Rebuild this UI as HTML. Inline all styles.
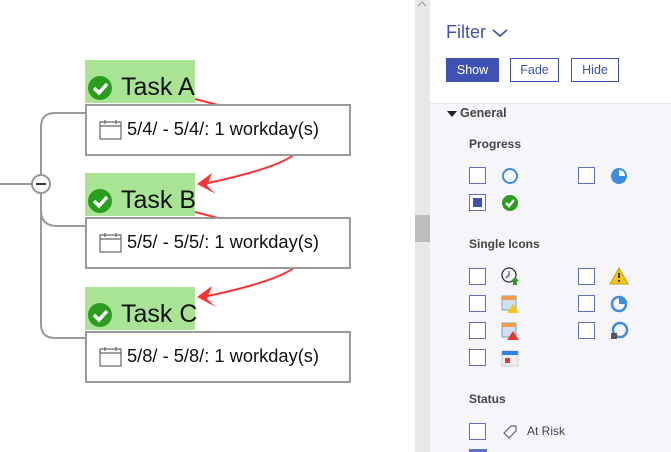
<!DOCTYPE html>
<html style="overflow:hidden"><head><style>
html,body{margin:0;width:671px;height:452px;overflow:hidden}
body{background:#fff;font-family:"Liberation Sans",sans-serif;position:relative}
.a{position:absolute}
.g{position:absolute;background:#a8e494;left:85px;width:110px;height:43px}
.tt{position:absolute;left:121px;font-size:25px;color:#111;line-height:30px}
.box{position:absolute;left:85px;width:262px;height:48px;border:2px solid #9a9a9a;background:#fff}
.dt{position:absolute;left:40px;top:12px;font-size:18.3px;color:#111}
.cb{position:absolute;width:15px;height:15px;border:1.5px solid #5f6fc4;background:#fff}
.lb{position:absolute;font-size:12px;font-weight:bold;color:#444}
.btn{position:absolute;top:58px;height:22px;border:1.5px solid #3f51b5;color:#3f51b5;font-size:12.5px;text-align:center;line-height:22px}
</style></head><body>
<svg class="a" style="left:0;top:0" width="415" height="452">
<g fill="none" stroke="#999" stroke-width="2">
<path d="M0 184H32"/>
<path d="M85 113H55Q41 113 41 127V324Q41 338 55 338H85"/>
<path d="M41 210Q41 226 57 226H85"/>
</g>
<circle cx="41" cy="184" r="9" fill="#fff" stroke="#999" stroke-width="2"/>
<path d="M36 184H46" stroke="#333" stroke-width="2"/>
<g fill="none" stroke="#f33" stroke-width="2">
<path d="M195 99Q260 115 300 135Q320 160 203 184"/>
<path d="M195 212Q260 228 300 248Q320 273 203 297"/>
</g>
<path d="M197 184L212 173L207 186L216 194Z" fill="#f33"/>
<path d="M197 297L212 286L207 299L216 307Z" fill="#f33"/>
</svg>
<div class="g" style="top:60px"></div>
<div class="g" style="top:173px"></div>
<div class="g" style="top:287px"></div>
<svg class="a" style="left:0;top:0" width="415" height="452">
<g><circle cx="100" cy="88" r="12" fill="#2a9d1e"/><path d="M94 88L99 93L107 84" stroke="#fff" stroke-width="3.5" fill="none"/></g>
<g><circle cx="100" cy="201" r="12" fill="#2a9d1e"/><path d="M94 201L99 206L107 197" stroke="#fff" stroke-width="3.5" fill="none"/></g>
<g><circle cx="100" cy="315" r="12" fill="#2a9d1e"/><path d="M94 315L99 320L107 311" stroke="#fff" stroke-width="3.5" fill="none"/></g>
</svg>
<div class="tt" style="top:72px">Task A</div>
<div class="tt" style="top:185px">Task B</div>
<div class="tt" style="top:299px">Task C</div>
<div class="box" style="top:104px"><svg class="a" style="left:12px;top:13px" width="24" height="22"><rect x="1" y="3" width="21" height="17" fill="none" stroke="#666" stroke-width="1.2"/><path d="M1 7H22M6 1V5M17 1V5" stroke="#666" stroke-width="1.2"/></svg><div class="dt">5/4/ - 5/4/: 1 workday(s)</div></div>
<div class="box" style="top:217px"><svg class="a" style="left:12px;top:13px" width="24" height="22"><rect x="1" y="3" width="21" height="17" fill="none" stroke="#666" stroke-width="1.2"/><path d="M1 7H22M6 1V5M17 1V5" stroke="#666" stroke-width="1.2"/></svg><div class="dt">5/5/ - 5/5/: 1 workday(s)</div></div>
<div class="box" style="top:331px"><svg class="a" style="left:12px;top:13px" width="24" height="22"><rect x="1" y="3" width="21" height="17" fill="none" stroke="#666" stroke-width="1.2"/><path d="M1 7H22M6 1V5M17 1V5" stroke="#666" stroke-width="1.2"/></svg><div class="dt">5/8/ - 5/8/: 1 workday(s)</div></div>

<div class="a" style="left:415px;top:0;width:15px;height:452px;background:#e8e8e8"></div>
<div class="a" style="left:415px;top:215px;width:15px;height:27px;background:#bdbdbd"></div>
<svg class="a" style="left:416px;top:0" width="12" height="8"><path d="M2 6L6 2L10 6" stroke="#999" fill="none"/></svg>
<div class="a" style="left:430px;top:103px;width:241px;height:349px;background:#f6f6fa;border-top:1px solid #e6e6ee"></div>
<div class="a" style="left:446px;top:22px;font-size:18px;color:#3f51b5">Filter</div>
<svg class="a" style="left:492px;top:28px" width="16" height="10"><path d="M1 2L8 8L15 2" stroke="#3f51b5" stroke-width="1.8" fill="none"/></svg>
<div class="btn" style="left:446px;width:51px;background:#3f51b5;color:#fff">Show</div>
<div class="btn" style="left:510px;width:47px">Fade</div>
<div class="btn" style="left:571px;width:46px">Hide</div>
<svg class="a" style="left:447px;top:110px" width="10" height="8"><path d="M0 1H10L5 7Z" fill="#222"/></svg>
<div class="lb" style="left:460px;top:106px;font-size:12.5px">General</div>
<div class="lb" style="left:469px;top:137px">Progress</div>
<div class="cb" style="left:469px;top:167px"></div>
<div class="cb" style="left:578px;top:167px"></div>
<div class="cb" style="left:469px;top:194px"><div class="a" style="left:3px;top:3px;width:9px;height:9px;background:#3f51b5"></div></div>
<svg class="a" style="left:500px;top:166px" width="20" height="20"><circle cx="10" cy="10" r="7" fill="none" stroke="#3b8de0" stroke-width="2"/></svg>
<svg class="a" style="left:609px;top:166px" width="20" height="20"><circle cx="10" cy="10" r="8" fill="#3b8de0"/><path d="M10 10V4A6 6 0 0 1 16 10Z" fill="#fff"/></svg>
<svg class="a" style="left:500px;top:193px" width="20" height="20"><circle cx="10" cy="10" r="8" fill="#2a9d1e"/><path d="M6 10L9 13L14 7" stroke="#fff" stroke-width="2.5" fill="none"/></svg>
<div class="lb" style="left:469px;top:237px">Single Icons</div>
<div class="cb" style="left:469px;top:268px"></div><div class="cb" style="left:578px;top:268px"></div>
<div class="cb" style="left:469px;top:295px"></div><div class="cb" style="left:578px;top:295px"></div>
<div class="cb" style="left:469px;top:322px"></div><div class="cb" style="left:578px;top:322px"></div>
<div class="cb" style="left:469px;top:349px"></div>
<svg class="a" style="left:500px;top:266px" width="20" height="20"><circle cx="9" cy="9" r="7" fill="none" stroke="#333" stroke-width="1.3"/><path d="M9 5V9L6 12" stroke="#333" fill="none"/><path d="M15 11L19 15H17V19H13V15H11Z" fill="#2a9d1e"/></svg>
<svg class="a" style="left:609px;top:266px" width="20" height="20"><path d="M10 2L19 18H1Z" fill="#f5c518" stroke="#c9a000"/><path d="M10 7V12M10 14V16" stroke="#333" stroke-width="2"/></svg>
<svg class="a" style="left:500px;top:294px" width="20" height="20"><rect x="2" y="2" width="14" height="14" fill="#cfe0f3" stroke="#7aa"/><rect x="2" y="2" width="14" height="4" fill="#f39c4a"/><path d="M13 10L19 19H7Z" fill="#f5c518"/></svg>
<svg class="a" style="left:609px;top:294px" width="20" height="20"><circle cx="10" cy="10" r="7" fill="none" stroke="#3b8de0" stroke-width="2.5"/><path d="M10 10V3A7 7 0 0 1 17 10Z" fill="#3b8de0"/></svg>
<svg class="a" style="left:500px;top:321px" width="20" height="20"><rect x="2" y="2" width="14" height="14" fill="#cfe0f3" stroke="#7aa"/><rect x="2" y="2" width="14" height="4" fill="#f39c4a"/><path d="M13 10L19 19H7Z" fill="#e53935"/></svg>
<svg class="a" style="left:609px;top:321px" width="20" height="20"><circle cx="11" cy="9" r="7" fill="none" stroke="#3b8de0" stroke-width="2.5"/><rect x="2" y="12" width="6" height="6" fill="#555"/></svg>
<svg class="a" style="left:500px;top:348px" width="20" height="20"><rect x="2" y="3" width="16" height="15" fill="#eee" stroke="#ccc"/><rect x="2" y="3" width="16" height="4" fill="#2f80ed"/><rect x="5" y="10" width="5" height="5" fill="#e53935"/></svg>
<div class="lb" style="left:469px;top:392px">Status</div>
<div class="cb" style="left:469px;top:423px"></div>
<svg class="a" style="left:502px;top:424px" width="16" height="16"><path d="M2 9L9 2H14V7L7 14Z" fill="none" stroke="#666" stroke-width="1.2"/></svg>
<div class="a" style="left:527px;top:424px;font-size:12px;color:#444">At Risk</div>
<div class="a" style="left:469px;top:449px;width:18px;height:3px;background:#5f6fc4"></div>
</body></html>
